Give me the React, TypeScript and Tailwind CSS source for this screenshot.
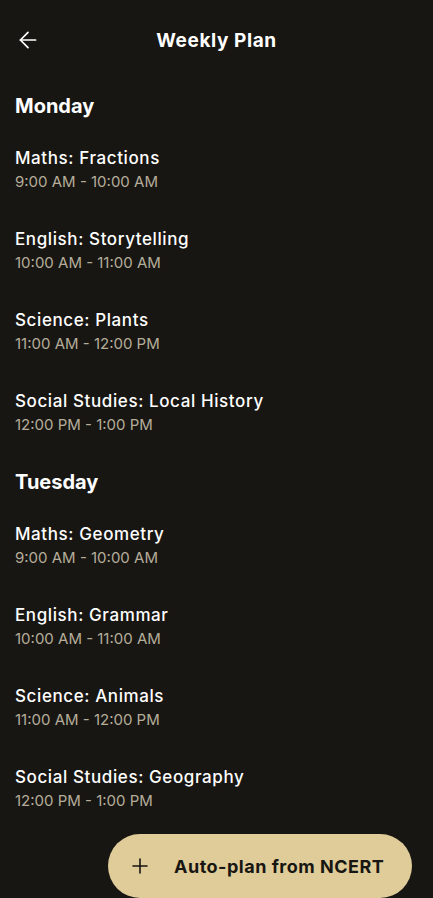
import { ArrowLeft, Plus } from 'lucide-react';

type Lesson = { title: string; time: string };

const week: { day: string; lessons: Lesson[] }[] = [
  {
    day: 'Monday',
    lessons: [
      { title: 'Maths: Fractions', time: '9:00 AM - 10:00 AM' },
      { title: 'English: Storytelling', time: '10:00 AM - 11:00 AM' },
      { title: 'Science: Plants', time: '11:00 AM - 12:00 PM' },
      { title: 'Social Studies: Local History', time: '12:00 PM - 1:00 PM' },
    ],
  },
  {
    day: 'Tuesday',
    lessons: [
      { title: 'Maths: Geometry', time: '9:00 AM - 10:00 AM' },
      { title: 'English: Grammar', time: '10:00 AM - 11:00 AM' },
      { title: 'Science: Animals', time: '11:00 AM - 12:00 PM' },
      { title: 'Social Studies: Geography', time: '12:00 PM - 1:00 PM' },
    ],
  },
];

export default function App() {
  return (
    <div
      className="relative min-h-[898px] w-full bg-[#181612] text-white"
      style={{ fontFamily: 'Inter, "Noto Sans", sans-serif' }}
    >
      {/* header */}
      <header className="relative flex h-[77px] items-center justify-center pt-[5px]">
        <button className="absolute left-[15px] top-[27px] text-white">
          <ArrowLeft size={26} strokeWidth={1.6} />
        </button>
        <h1 className="text-[19px] font-bold tracking-[0.6px]">Weekly Plan</h1>
      </header>

      <main className="px-[15px]">
        {week.map((d) => (
          <section key={d.day}>
            <h2 className="pt-[15px] pb-[9px] text-[20px] font-bold leading-7">{d.day}</h2>
            {d.lessons.map((l) => (
              <div key={l.title} className="pt-[17px] pb-[18px]">
                <p className="text-[17px] font-medium leading-6 tracking-[0.6px] text-white">{l.title}</p>
                <p className="mt-[2px] text-[15px] leading-5 text-[#b5ad9a]">{l.time}</p>
              </div>
            ))}
          </section>
        ))}
      </main>

      {/* floating action button */}
      <button className="fixed bottom-0 right-[21px] flex h-[64px] w-[304px] items-center gap-[22px] rounded-full bg-[#dfcc98] pl-[20px] text-[#181612]">
        <Plus size={24} strokeWidth={1.6} />
        <span className="text-[18px] font-bold tracking-[0.5px]">Auto-plan from NCERT</span>
      </button>
    </div>
  );
}
